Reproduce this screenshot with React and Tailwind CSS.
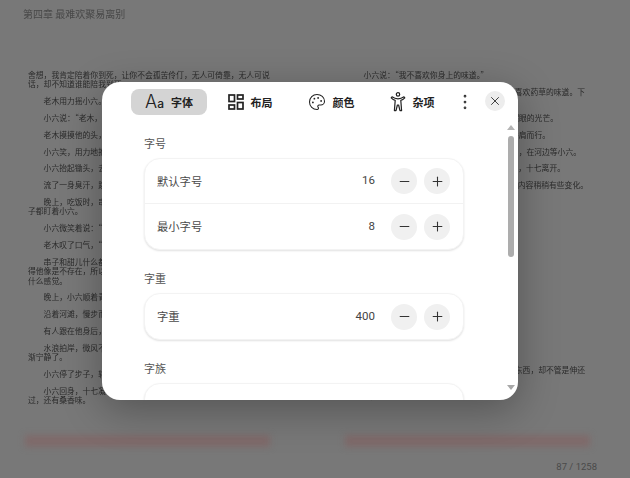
import React from 'react';
import { Minus, Plus, X, EllipsisVertical, Palette } from 'lucide-react';

// each paragraph is a list of lines, the page is split by hand like the reader does
const leftPage = [
  { flush: true, lines: ['舍想，我肯定陪着你到死，让你不会孤苦伶仃，无人可倚靠，无人可说', '话，却不知道谁能陪我到死。'] },
  { lines: ['老木用力摇小六。'] },
  { lines: ['小六说：“老木，'] },
  { lines: ['老木摸摸他的头，'] },
  { lines: ['小六笑，用力地抱'] },
  { lines: ['小六抬起锄头，去'] },
  { lines: ['流了一身臭汗，跳'] },
  { lines: ['晚上，吃饭时，串'], rest: ['子都盯着小六。'] },
  { lines: ['小六微笑着说：“'] },
  { lines: ['老木叹了口气，“'] },
  { lines: ['串子和甜儿什么都'], rest: ['得他像是不存在，所以', '什么感觉。'] },
  { lines: ['晚上，小六顺着青'] },
  { lines: ['沿着河滩，慢步而'] },
  { lines: ['有人跟在他身后，'] },
  { lines: ['水浪拍岸，微风不'], rest: ['渐宁静了。'] },
  { lines: ['小六停了步子，转'] },
  { lines: ['小六回身，十七凝'], rest: ['过，还有桑香味。'] },
];

const sections = [
  { title: '字号', rows: [{ label: '默认字号', value: 16 }, { label: '最小字号', value: 8 }] },
  { title: '字重', rows: [{ label: '字重', value: 400 }] },
  { title: '字族', rows: [{ label: '', value: null }] },
];

const LayoutIcon = () => (
  <svg width="16" height="16" viewBox="0 0 16 16" fill="none" stroke="currentColor" strokeWidth="1.7">
    <rect x="1" y="1" width="5.5" height="6.5" />
    <rect x="9.5" y="1" width="5.5" height="4" />
    <rect x="1" y="11" width="5.5" height="4" />
    <rect x="9.5" y="8.5" width="5.5" height="6.5" />
  </svg>
);

const FigureIcon = () => (
  <svg width="16" height="20" viewBox="0 0 16 20" fill="none" stroke="currentColor" strokeWidth="1.2" strokeLinejoin="round">
    <circle cx="8" cy="2.4" r="1.7" />
    <path d="M1.2 5.8 L2 4.8 C4 6.2 6 6.8 8 6.8 C10 6.8 12 6.2 14 4.8 L14.8 5.8 C13.4 7.2 12 8 10.8 8.4 L11.6 18.6 H10 L8.6 13 H7.4 L6 18.6 H4.4 L5.2 8.4 C4 8 2.6 7.2 1.2 5.8 Z" />
  </svg>
);

const Page = ({ paragraphs }) => (
  <div className="overflow-hidden">
    {paragraphs.map((p, i) => (
      <div key={i} className="mb-[7.4px]">
        {p.lines.map((line, j) => (
          <div key={j} className={p.flush ? '' : 'pl-[15.6px]'}>{line}</div>
        ))}
        {p.rest && p.rest.map((line, j) => <div key={j}>{line}</div>)}
      </div>
    ))}
  </div>
);

// only the ends of these lines stick out from behind the dialog
const RightPage = () => (
  <div className="overflow-hidden">
    <div className="mb-[7.4px] pl-[15.6px]">小六说：“我不喜欢你身上的味道。”</div>
    <div className="mb-[7.4px] h-[18.8px] text-right pr-[9px]">喜欢药草的味道。下</div>
    <div className="mb-[7.4px] text-right pr-[36px]">耀眼的光芒。</div>
    <div className="mb-[7.4px] text-right pr-[44px]">并肩而行。</div>
    <div className="mb-[7.4px] text-right pr-[13px]">，在河边等小六。</div>
    <div className="mb-[7.4px] text-right pr-[29px]">，十七离开。</div>
    <div className="text-right pr-[6px]">内容稍稍有些变化。</div>
    <div className="mt-[175.4px] text-right pr-[9px]">东西，却不管是伸还</div>
    <div className="mt-[17px] pl-[22px]">，</div>
  </div>
);

const RoundButton = ({ children }) => (
  <button className="w-[26px] h-[26px] rounded-full bg-[#f0f0f0] flex items-center justify-center text-[#333]">
    {children}
  </button>
);

const Stepper = ({ label, value, last }) => (
  <div className={`h-[45px] flex items-center pl-[12px] pr-[13px] ${last ? '' : 'border-b border-[#f2f2f2]'}`}>
    <span className="text-[11.3px] text-[#4a4a4a]">{label}</span>
    {value !== null && (
      <div className="ml-auto flex items-center">
        <span className="font-['Roboto',sans-serif] text-[11.5px] text-[#444] mr-[16px]">{value}</span>
        <div className="flex items-center gap-[7px]">
          <RoundButton><Minus size={15} strokeWidth={1.7} /></RoundButton>
          <RoundButton><Plus size={15} strokeWidth={1.7} /></RoundButton>
        </div>
      </div>
    )}
  </div>
);

const Tab = ({ icon, label, active }) => (
  <button className={`w-[76px] h-[26px] rounded-lg flex items-center justify-center gap-[7px] text-[#222] ${active ? 'bg-[#d4d4d4]' : ''}`}>
    {icon}
    <span className="text-[11px] font-semibold">{label}</span>
  </button>
);

const SettingsModal = () => (
  <div className="absolute left-[102px] top-[82px] w-[416px] h-[318px] bg-white rounded-[18px] overflow-hidden flex flex-col shadow-[0_10px_40px_rgba(0,0,0,0.3)]">
    <div className="h-[38px] pt-[7px] pl-[29px] flex items-start shrink-0">
      <div className="flex items-center gap-[5px]">
        <Tab
          active
          label="字体"
          icon={
            <span className="font-['Inter',sans-serif] flex items-baseline text-[#222] leading-none">
              <span className="text-[18px] font-light">A</span>
              <span className="text-[12px] font-medium">a</span>
            </span>
          }
        />
        <Tab label="布局" icon={<LayoutIcon />} />
        <Tab label="颜色" icon={<Palette size={18} strokeWidth={1.4} />} />
        <Tab label="杂项" icon={<FigureIcon />} />
      </div>
      <button className="ml-[5px] w-[20px] h-[26px] flex items-center justify-center text-[#333]">
        <EllipsisVertical size={20} strokeWidth={1.3} />
      </button>
      <button className="ml-[10px] mt-[2px] w-[20px] h-[20px] rounded-full bg-[#ededed] flex items-center justify-center text-[#333]">
        <X size={14} strokeWidth={1.6} />
      </button>
    </div>
    <div className="flex-1 flex min-h-0">
      <div className="flex-1 overflow-hidden pl-[42px] pt-[15px]">
        {sections.map((section) => (
          <div key={section.title} className="w-[320px] mb-[20px]">
            <div className="h-[16px] text-[11px] leading-[16px] text-[#555] mb-[7px]">{section.title}</div>
            <div className="rounded-2xl border border-[#f3f3f3] bg-white shadow-[0_1px_2px_rgba(0,0,0,0.12)]">
              {section.rows.map((row, i) => (
                <Stepper key={i} label={row.label} value={row.value} last={i === section.rows.length - 1} />
              ))}
            </div>
          </div>
        ))}
      </div>
      <div className="w-[6px] mr-[4px] flex flex-col items-center pt-[5px] pb-[10px] shrink-0">
        <div className="w-0 h-0 border-x-[4px] border-x-transparent border-b-[5px] border-b-[#b5b5b5]" />
        <div className="w-[6px] h-[121px] mt-[6px] rounded-full bg-[#adadad]" />
        <div className="mt-auto w-0 h-0 border-x-[4px] border-x-transparent border-t-[5px] border-t-[#a8a8a8]" />
      </div>
    </div>
  </div>
);

export default function App() {
  return (
    <div className="relative w-full h-[478px] overflow-hidden bg-[#787878] flex flex-col font-['Noto_Sans_CJK_SC','Noto_Sans',sans-serif]">
      <div className="h-[70px] pl-[23px] pt-[7px] text-[10px] leading-[14px] text-[#484848] blur-[0.3px] shrink-0">
        第四章 最难欢聚易离别
      </div>
      <div className="h-[365px] pl-[28px] grid grid-cols-[246px_246px] gap-x-[74px] shrink-0 overflow-hidden text-[7.8px] leading-[9.4px] text-[#2a2a2a] whitespace-nowrap blur-[0.3px]">
        <Page paragraphs={leftPage} />
        <RightPage />
      </div>
      <div className="h-[12px] pl-[25px] grid grid-cols-[245px_245px] gap-x-[75px] shrink-0">
        <div className="bg-[#7f6a6a] blur-[3px]" />
        <div className="bg-[#7f6a6a] blur-[3px]" />
      </div>
      <div className="pt-[13px] pr-[33px] text-right font-['Roboto',sans-serif] text-[9.5px] leading-[14px] text-[#4a4a4a]">
        87 / 1258
      </div>
      <SettingsModal />
    </div>
  );
}
